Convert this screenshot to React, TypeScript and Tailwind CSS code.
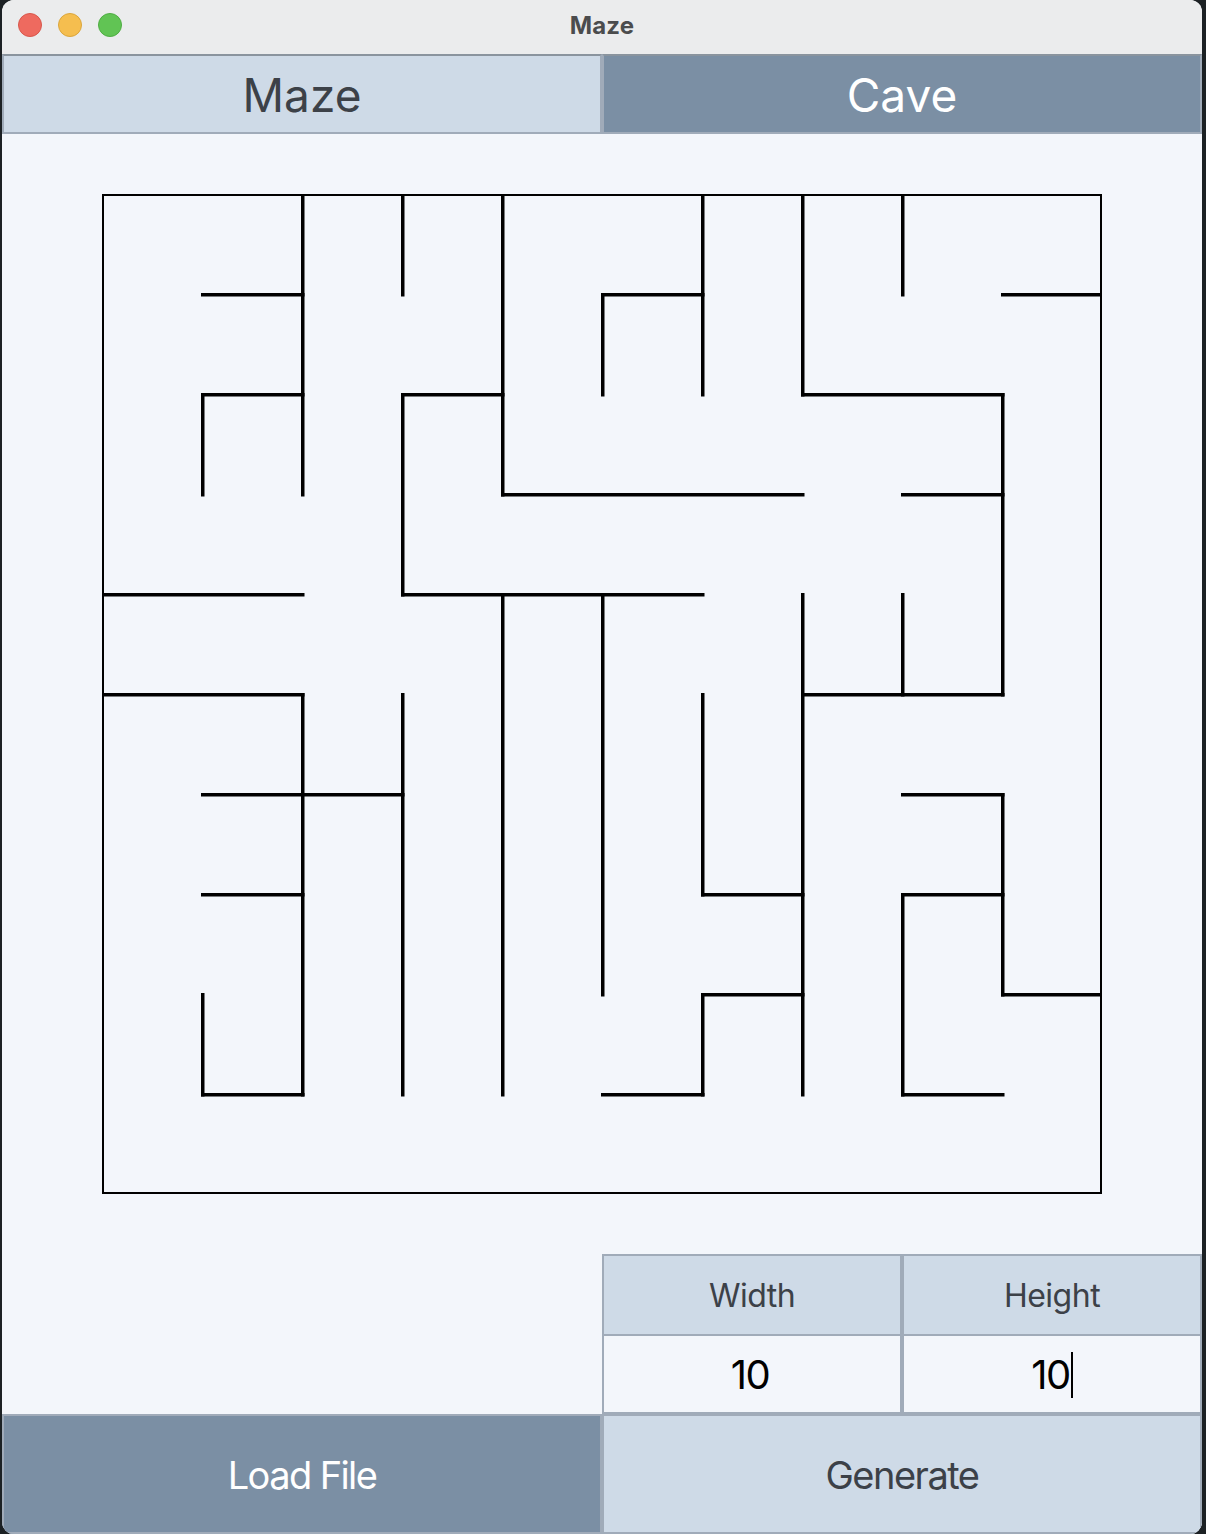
import React from "react";

const V: [number, number, number][] = [
  [1, 2, 3], [1, 8, 9],
  [2, 0, 3], [2, 5, 9],
  [3, 0, 1], [3, 2, 4], [3, 5, 9],
  [4, 0, 3], [4, 4, 9],
  [5, 1, 2], [5, 4, 8],
  [6, 0, 2], [6, 5, 7], [6, 8, 9],
  [7, 0, 2], [7, 4, 9],
  [8, 0, 1], [8, 4, 5], [8, 7, 9],
  [9, 2, 5], [9, 6, 8],
];

const H: [number, number, number][] = [
  [1, 1, 2], [1, 5, 6], [1, 9, 10],
  [2, 1, 2], [2, 3, 4], [2, 7, 9],
  [3, 4, 7], [3, 8, 9],
  [4, 0, 2], [4, 3, 6],
  [5, 0, 2], [5, 7, 9],
  [6, 1, 3], [6, 8, 9],
  [7, 1, 2], [7, 6, 7], [7, 8, 9],
  [8, 6, 7], [8, 9, 10],
  [9, 1, 2], [9, 5, 6], [9, 8, 9],
];

function Maze() {
  const p = (i: number) => (i === 0 ? 1.75 : i === 10 ? 998.25 : i * 100 + 0.75);
  return (
    <svg width="1000" height="1000" viewBox="0 0 1000 1000" className="block">
      <rect x="1" y="1" width="998" height="998" fill="none" stroke="#000" strokeWidth="2" />
      {V.map(([x, a, b], k) => (
        <line key={"v" + k} x1={p(x)} y1={p(a)} x2={p(x)} y2={p(b)} stroke="#000" strokeWidth="3.5" strokeLinecap="square" />
      ))}
      {H.map(([y, a, b], k) => (
        <line key={"h" + k} x1={p(a)} y1={p(y)} x2={p(b)} y2={p(y)} stroke="#000" strokeWidth="3.5" strokeLinecap="square" />
      ))}
    </svg>
  );
}

const font = { fontFamily: "Inter, 'Noto Sans', sans-serif" };

export default function App() {
  return (
    <div className="w-[1206px] h-[1534px] bg-[#1c2124]" style={font}>
      <div className="ml-[2px] w-[1200px] h-[1534px] rounded-[12px] overflow-hidden bg-[#f3f6fb] flex flex-col">
        <div className="relative h-[54px] bg-[#ebeced] flex items-center justify-center shrink-0">
          <div className="absolute left-[16px] top-[13px] flex gap-[16px]">
            <div className="w-[24px] h-[24px] rounded-full bg-[#ee6a5f] border border-[#d8574c]" />
            <div className="w-[24px] h-[24px] rounded-full bg-[#f5be4f] border border-[#dba63c]" />
            <div className="w-[24px] h-[24px] rounded-full bg-[#61c454] border border-[#4fad43]" />
          </div>
          <span className="text-[24px] font-bold text-[#4b4c4d] tracking-[0.2px] pb-[2px]">Maze</span>
        </div>
        <div className="flex h-[80px] shrink-0">
          <div className="w-1/2 border-2 border-[#a0abb9] border-t-[#8a949e] bg-[#cedae7] text-[#3c4148] flex items-center justify-center text-[46px] leading-none pt-[2px]">
            Maze
          </div>
          <div className="w-1/2 border-2 border-[#a0abb9] border-t-[#8a949e] bg-[#7b8fa4] text-white flex items-center justify-center text-[46px] leading-none pt-[2px]">
            Cave
          </div>
        </div>
        <div className="h-[1120px] pt-[60px] pl-[100px] shrink-0">
          <Maze />
        </div>
        <div className="flex justify-end h-[160px] shrink-0">
          <div className="w-[600px] grid grid-cols-2">
            <div className="h-[82px] border-2 border-[#a0abb9] bg-[#cedae7] text-[#3c4148] flex items-center justify-center text-[32px] tracking-[-0.5px] pt-[2px]">
              Width
            </div>
            <div className="h-[82px] border-2 border-[#a0abb9] bg-[#cedae7] text-[#3c4148] flex items-center justify-center text-[32px] tracking-[-0.5px] pt-[2px]">
              Height
            </div>
            <div className="h-[78px] border-2 border-t-0 border-[#a0abb9] bg-[#f3f6fb] text-black flex items-center justify-center text-[40px] tracking-[-1.5px] pt-[2px] pr-[4px]">
              10
            </div>
            <div className="h-[78px] border-2 border-t-0 border-[#a0abb9] bg-[#f3f6fb] text-black flex items-center justify-center text-[40px] tracking-[-1.5px] pt-[2px]">
              <span>10</span>
              <span className="w-[2px] h-[46px] bg-black ml-[1px]" />
            </div>
          </div>
        </div>
        <div className="flex h-[120px] shrink-0">
          <div className="w-1/2 border-2 border-[#a0abb9] bg-[#7b8fa4] text-white flex items-center justify-center text-[38px] tracking-[-1.6px] pt-[2px]">
            Load File
          </div>
          <div className="w-1/2 border-2 border-[#a0abb9] bg-[#cedae7] text-[#3c4148] flex items-center justify-center text-[38px] tracking-[-1.5px] pt-[2px]">
            Generate
          </div>
        </div>
      </div>
    </div>
  );
}
